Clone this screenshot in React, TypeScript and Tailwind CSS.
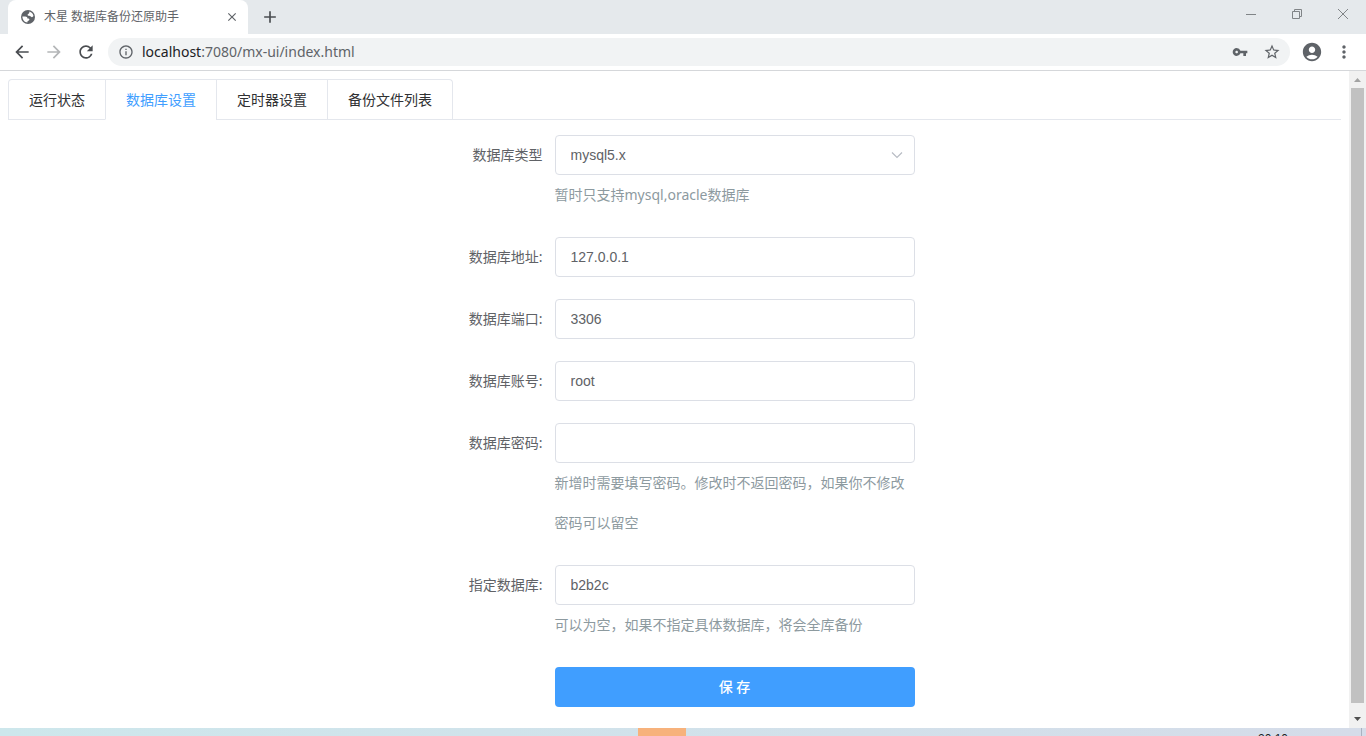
import { useState } from "react";
import type { ReactNode } from "react";
import {
  MdAccountCircle,
  MdAdd,
  MdArrowBack,
  MdArrowForward,
  MdClose,
  MdInfoOutline,
  MdMoreVert,
  MdRefresh,
  MdStarBorder,
  MdVpnKey,
} from "react-icons/md";

const tabs = ["运行状态", "数据库设置", "定时器设置", "备份文件列表"];

const inputClass =
  "block h-10 w-full rounded border border-[#dcdfe6] bg-white px-[15px] font-['Liberation_Sans','Noto_Sans_CJK_SC',sans-serif] text-sm text-[#606266] outline-none focus:border-[#409eff]";

function GlobeIcon() {
  return (
    <svg viewBox="0 0 16 16" className="size-4" aria-hidden="true">
      <circle cx="8" cy="8" r="7" fill="#5f6368" />
      <path
        d="M9.4 2.6 C11.400 3.200 13 4.800 13.500 7 C12.800 8.200 11.800 8.400 11 7.800 C10.400 7 9.600 6.800 8.600 6.800 C7.400 6.600 7.200 5.400 8.200 5 C9.200 4.600 9.400 3.800 9.400 2.600Z"
        fill="#fff"
      />
      <path
        d="M2.400 7.600 L5.200 7.600 C6.800 7.600 7.400 8.400 7.400 9.400 L8.600 9.600 C9.800 10 9.600 11.600 8.400 11.800 C7.600 12 7.400 12.600 7.400 13.600 C4.600 13.400 2.400 11 2.400 7.600Z"
        fill="#fff"
      />
    </svg>
  );
}

function TabStrip() {
  return (
    <div className="flex h-[34px] items-stretch bg-[#e5e9ec] pl-2">
      <div className="flex w-60 items-center rounded-t-lg bg-white pr-2 pl-3 text-xs text-[#5f6368]">
        <GlobeIcon />
        <span className="ml-2 flex-1 truncate">木星 数据库备份还原助手</span>
        <button type="button" aria-label="关闭标签页" className="flex size-4 items-center justify-center">
          <MdClose size={14} stroke="currentColor" />
        </button>
      </div>
      <button type="button" aria-label="新标签页" className="ml-3 flex items-center text-[#4a4d51]">
        <MdAdd size={20} />
      </button>
      <div className="ml-auto flex h-7 text-[#808487]">
        <button type="button" aria-label="最小化" className="flex w-[46px] items-center justify-center">
          <svg viewBox="0 0 12 12" className="size-3" fill="none" stroke="currentColor">
            <path d="M1 6.5H11" />
          </svg>
        </button>
        <button type="button" aria-label="还原" className="flex w-[46px] items-center justify-center">
          <svg viewBox="0 0 12 12" className="size-3" fill="none" stroke="currentColor">
            <path d="M1.5 3.5H8.5V10.5H1.5ZM3.5 3.5V1.5H10.5V8.5H8.5" />
          </svg>
        </button>
        <button type="button" aria-label="关闭" className="flex w-[46px] items-center justify-center">
          <svg viewBox="0 0 12 12" className="size-3" fill="none" stroke="currentColor">
            <path d="M1 1L11 11M11 1L1 11" />
          </svg>
        </button>
      </div>
    </div>
  );
}

function Toolbar() {
  return (
    <div className="flex h-[37px] items-center border-b border-[#d5d7da] bg-white px-3 text-[#5f6368]">
      <div className="flex items-center gap-3">
        <button type="button" aria-label="后退" className="text-[#4a4d51]">
          <MdArrowBack size={20} />
        </button>
        <button type="button" aria-label="前进" className="text-[#b4b6b8]">
          <MdArrowForward size={20} />
        </button>
        <button type="button" aria-label="重新加载" className="text-[#4a4d51]">
          <MdRefresh size={20} />
        </button>
      </div>
      <div className="ml-3 flex h-7 flex-1 items-center rounded-full bg-[#f1f3f4] pr-2 pl-[10px]">
        <MdInfoOutline size={16} />
        <span className="ml-2 flex-1 font-['Noto_Sans',sans-serif] text-sm">
          <span className="text-[#202124]">localhost</span>:7080/mx-ui/index.html
        </span>
        <div className="flex gap-3">
          <button type="button" aria-label="密码" className="flex size-5 items-center justify-center">
            <MdVpnKey size={16} />
          </button>
          <button type="button" aria-label="收藏" className="flex size-5 items-center justify-center">
            <MdStarBorder size={18} />
          </button>
        </div>
      </div>
      <div className="ml-[10px] flex items-center gap-[10px]">
        <button type="button" aria-label="用户" className="flex size-6 items-center justify-center">
          <MdAccountCircle size={22} />
        </button>
        <button type="button" aria-label="菜单">
          <MdMoreVert size={20} />
        </button>
      </div>
    </div>
  );
}

type FieldProps = {
  id: string;
  label: string;
  help?: string;
  children: ReactNode;
};

function Field({ id, label, help, children }: FieldProps) {
  return (
    <div className="mb-[22px] flex">
      <label htmlFor={id} className="w-[120px] shrink-0 pr-3 text-right text-sm leading-10 text-[#606266]">
        {label}
      </label>
      <div className="min-w-0 flex-1">
        {children}
        {help && <p className="text-sm leading-10 text-[#8d9a9f]">{help}</p>}
      </div>
    </div>
  );
}

function SettingsForm() {
  return (
    <form className="mx-auto mt-[15px] w-full max-w-[480px]" onSubmit={(e) => e.preventDefault()}>
      <Field id="dbType" label="数据库类型" help="暂时只支持mysql,oracle数据库">
        <div className="relative">
          <select id="dbType" defaultValue="mysql5.x" className={`${inputClass} appearance-none`}>
            <option>mysql5.x</option>
            <option>oracle</option>
          </select>
          <svg
            viewBox="0 0 12 12"
            className="pointer-events-none absolute top-[14px] right-3 size-3"
            fill="none"
            stroke="#b8bcc4"
            strokeWidth="1.2"
          >
            <path d="M1 3.5L6 8.5L11 3.5" />
          </svg>
        </div>
      </Field>
      <Field id="host" label="数据库地址:">
        <input id="host" type="text" defaultValue="127.0.0.1" className={inputClass} />
      </Field>
      <Field id="port" label="数据库端口:">
        <input id="port" type="text" defaultValue="3306" className={inputClass} />
      </Field>
      <Field id="user" label="数据库账号:">
        <input id="user" type="text" defaultValue="root" className={inputClass} />
      </Field>
      <Field
        id="password"
        label="数据库密码:"
        help="新增时需要填写密码。修改时不返回密码，如果你不修改密码可以留空"
      >
        <input id="password" type="password" className={inputClass} />
      </Field>
      <Field id="dbName" label="指定数据库:" help="可以为空，如果不指定具体数据库，将会全库备份">
        <input id="dbName" type="text" defaultValue="b2b2c" className={inputClass} />
      </Field>
      <div className="pl-[120px]">
        <button type="submit" className="h-10 w-full rounded bg-[#409eff] text-sm font-medium text-white">
          保 存
        </button>
      </div>
    </form>
  );
}

function ScrollBar() {
  return (
    <div className="flex w-[17px] shrink-0 flex-col items-center bg-[#f1f1f1]">
      <svg viewBox="0 0 17 17" className="size-[17px]" aria-hidden="true">
        <path d="M5 11L8.5 7L12 11Z" fill="#a3a3a3" />
      </svg>
      <div className="w-[13px] flex-1 bg-[#c1c1c1]" />
      <svg viewBox="0 0 17 25" className="h-[25px] w-[17px]" aria-hidden="true">
        <path d="M5 14L8.5 18L12 14Z" fill="#505050" />
      </svg>
    </div>
  );
}

function App() {
  const [active, setActive] = useState(1);

  return (
    <div className="flex h-screen flex-col overflow-hidden bg-white font-['Noto_Sans','Noto_Sans_CJK_SC',sans-serif]">
      <TabStrip />
      <Toolbar />
      <div className="flex min-h-0 flex-1">
        <main className="min-w-0 flex-1 p-2">
          <div className="flex border-b border-[#e4e7ed]">
            <div role="tablist" className="-mb-px flex rounded-t border border-b-0 border-[#e4e7ed]">
              {tabs.map((tab, i) => (
                <button
                  key={tab}
                  type="button"
                  role="tab"
                  aria-selected={i === active}
                  onClick={() => setActive(i)}
                  className={`h-10 border-b border-l border-l-[#e4e7ed] px-5 text-sm first:border-l-0 ${
                    i === active ? "border-b-white text-[#409eff]" : "border-b-[#e4e7ed] text-[#303133]"
                  }`}
                >
                  {tab}
                </button>
              ))}
            </div>
          </div>
          <SettingsForm />
        </main>
        <ScrollBar />
      </div>
      <footer className="flex h-2 shrink-0 overflow-hidden bg-linear-to-r from-[#cde7ec] to-[#d5dce9]">
        <div className="w-[638px] shrink-0" />
        <div className="w-12 shrink-0 bg-[#f7b27c]" />
        <time className="mt-1 mr-[73px] ml-auto font-['Liberation_Sans',sans-serif] text-xs leading-[14px] text-[#202124]">
          20:10
        </time>
        <div className="mr-1 w-px bg-[#a9b2c0]" />
      </footer>
    </div>
  );
}

export default App;
